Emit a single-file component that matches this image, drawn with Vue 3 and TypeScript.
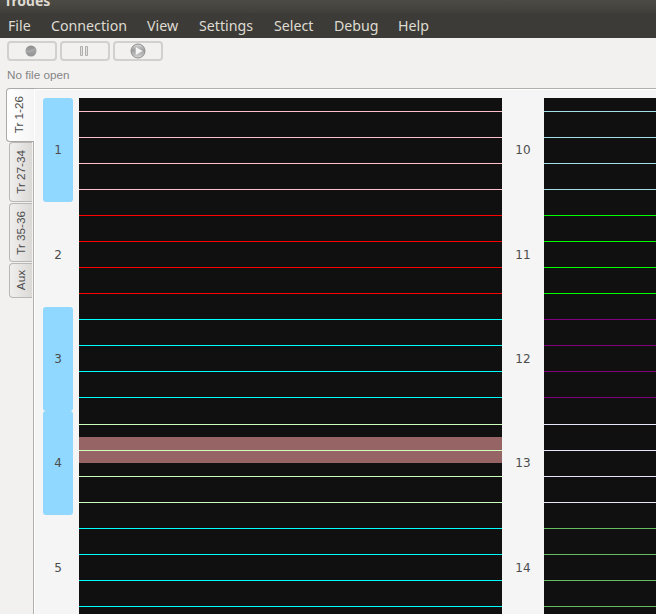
<script setup lang="ts">
interface Trode { id: number; color: string; alt?: boolean; lines: number[] }

const menus: string[] = ['File', 'Connection', 'View', 'Settings', 'Select', 'Debug', 'Help']
const tabs = [
  { label: 'Tr 27-34', size: 60 },
  { label: 'Tr 35-36', size: 59 },
  { label: 'Aux', size: 35 },
]
const gaps: number[][] = [[13, 26, 26, 26], [26, 26, 26, 26], [26, 26, 26, 26], [27, 26, 26, 26], [26, 26, 26, 26]]
const build = (first: number, colors: string[]): Trode[] =>
  colors.map((color, i) => ({ id: first + i, color, alt: first === 1 && [0, 2, 3].includes(i), lines: gaps[i] }))
const left = build(1, ['#ffc0cb', '#ff0000', '#00ffff', '#ccffbb', '#00ffff'])
const right = build(10, ['#a0dfe6', '#00ff00', '#800080', '#e6e6fa', '#66bb5e'])
</script>

<template>
  <div class="window">
    <header class="title"><span>Trodes</span></header>
    <nav class="menu"><span v-for="m in menus" :key="m" :class="m.toLowerCase()">{{ m }}</span></nav>
    <div class="toolbar">
      <button><svg class="rec" width="12" height="12"><defs><linearGradient id="rec" x2="0" y2="1"><stop stop-color="#8c8c8c"/><stop offset=".5" stop-color="#a2a2a2"/><stop offset="1" stop-color="#929292"/></linearGradient></defs><circle cx="6" cy="6" r="5.5" fill="url(#rec)"/><path d="M1.500 7Q6 7 10 3.500" fill="none" stroke="#b4b4b4" stroke-width=".8"/></svg></button>
      <button><svg class="pause" width="12" height="12"><path d="M2.500 1.500h2v9h-2zM7.500 1.500h2v9h-2z" fill="#e0e0df" stroke="#b0b0af"/></svg></button>
      <button><svg class="play" width="16" height="16"><defs><linearGradient id="ball" x2="0" y2="1"><stop stop-color="#dedede"/><stop offset=".45" stop-color="#9c9c9c"/><stop offset="1" stop-color="#d8d8d8"/></linearGradient></defs><circle cx="8" cy="8" r="7" fill="url(#ball)" stroke="#8e8e8e"/><path d="M5.500 3.500v9l7.500-4.500z" fill="#f5f5f5" stroke="#b5b5b5" stroke-width=".6"/></svg></button>
    </div>
    <p class="status">No file open</p>
    <main class="content">
      <aside class="tabs">
        <div class="tab active"><span>Tr 1-26</span></div>
        <div v-for="t in tabs" :key="t.label" class="tab" :style="{ height: t.size + 'px' }"><span>{{ t.label }}</span></div>
      </aside>
      <section class="panel">
        <div class="labels"><span v-for="t in left" :key="t.id" :class="{ on: t.alt }">{{ t.id }}</span></div>
        <div class="plot first">
          <template v-for="t in left" :key="t.id"><div v-for="(g, i) in t.lines" :key="i" class="trace" :style="{ height: g + 'px' }"><i :style="{ background: t.color }"></i></div></template>
          <div class="selection"></div>
        </div>
        <div class="labels second"><span v-for="t in right" :key="t.id">{{ t.id }}</span></div>
        <div class="plot">
          <template v-for="t in right" :key="t.id"><div v-for="(g, i) in t.lines" :key="i" class="trace" :style="{ height: g + 'px' }"><i :style="{ background: t.color }"></i></div></template>
        </div>
      </section>
    </main>
  </div>
</template>

<style>
body { overflow: hidden; }
</style>
<style scoped>
* { box-sizing: border-box; }
.window { width: 656px; height: 614px; overflow: hidden; background: #f2f1f0; display: flex; flex-direction: column; color: #4c4c4c; font-family: "Liberation Sans", Arial, sans-serif; }
.title { height: 13px; flex: none; background: linear-gradient(#4d4b45, #403f3a); color: #dfdbd2; font: bold 14px/18px "Noto Sans", sans-serif; padding-left: 4px; }
.title span { display: block; margin-top: -8px; }
.menu { height: 25px; flex: none; background: #3c3b37; color: #dfdbd2; font: 14.2px/26px "Noto Sans", sans-serif; padding-left: 8px; display: flex; }
.menu span { white-space: nowrap; }
.file { width: 43px; } .connection { width: 96px; } .view { width: 52px; } .settings { width: 75px; } .select { width: 60px; } .debug { width: 64px; }
.toolbar { padding: 3px 0 0 7px; display: flex; gap: 3px; height: 25px; flex: none; }
.toolbar button { width: 50px; height: 20px; padding: 0; border: 2px solid #d1d0cf; border-radius: 4px; background: #f2f1f0; display: flex; align-items: center; justify-content: center; }
.rec, .pause { margin-right: 2px; }
.play { margin-right: 1px; }
.status { margin: 0; padding-left: 7px; height: 25px; flex: none; font-size: 11.7px; line-height: 23px; color: #858585; }
.content { flex: 1; min-height: 0; display: flex; }
.tabs { width: 34px; flex: none; padding-left: 6px; position: relative; z-index: 1; }
.tab { width: 23px; margin-left: 3px; margin-bottom: 1px; padding-right: 2px; border: 1px solid #b9b7b5; border-right: 0; border-radius: 4px 0 0 4px; background: linear-gradient(90deg, #f0efee, #dbd9d6); display: flex; align-items: center; justify-content: center; }
.tab span { writing-mode: vertical-rl; transform: rotate(180deg); font-size: 11.7px; line-height: 13px; white-space: nowrap; color: #4c4c4c; }
.tab.active { width: 28px; height: 54px; margin: 0; padding-right: 4px; background: linear-gradient(90deg, #fff, #f5f5f5); border-color: #aaa8a6; }
.panel { flex: 1; min-width: 0; margin-left: -1px; border: 1px solid #b2b0ad; border-right: 0; border-bottom: 0; box-shadow: inset 1px 1px #fff; background: #f5f5f5; padding: 9px 0 0 9px; display: flex; }
.labels { width: 30px; flex: none; font: 12px "DejaVu Sans", sans-serif; }
.labels span { height: 104.35px; padding-top: .3px; display: flex; align-items: center; justify-content: center; border-radius: 3px; }
.labels .on { background: #90d8ff; }
.labels.second { width: 42px; }
.plot { flex: 1; background: #101010; position: relative; height: 516px; overflow: hidden; }
.plot.first { flex: none; width: 423px; margin-left: 6px; }
.trace { position: relative; z-index: 1; display: flex; align-items: flex-end; transform: translateY(1px); }
.trace i { display: block; width: 100%; height: 1px; }
.selection { position: absolute; top: 339px; left: 0; right: 0; height: 26px; background: #966464; }
</style>
